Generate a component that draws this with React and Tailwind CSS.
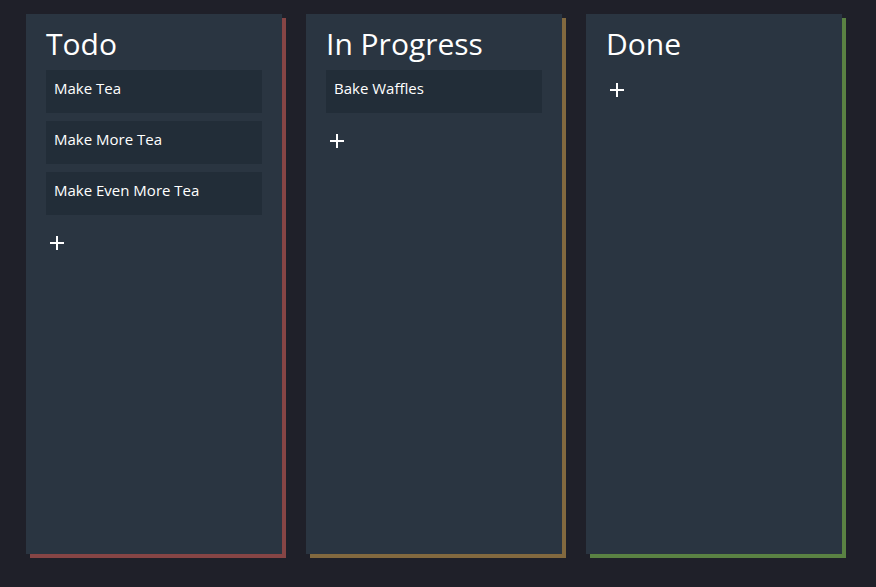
import React from 'react'

const columns = [
  { title: 'Todo', shadow: 'shadow-[4px_4px_0_#864545]', cards: ['Make Tea', 'Make More Tea', 'Make Even More Tea'] },
  { title: 'In Progress', shadow: 'shadow-[4px_4px_0_#82693f]', cards: ['Bake Waffles'] },
  { title: 'Done', shadow: 'shadow-[4px_4px_0_#5a8243]', cards: [] },
]

const Plus = () => (
  <svg width="16" height="16" viewBox="0 0 16 16" className="text-white">
    <path d="M8 1v14M1 8h14" stroke="currentColor" strokeWidth="2" />
  </svg>
)

const Column = ({ title, shadow, cards }) => (
  <div className={`w-[256px] h-[540px] bg-[#2a3541] px-5 pt-[4px] flex flex-col ${shadow}`}>
    <h2 className="text-[30px] leading-[52px] text-white">{title}</h2>
    <div className="flex flex-col gap-2">
      {cards.map((c) => (
        <div key={c} className="h-[43px] bg-[#222d38] px-2 pt-[5px] text-[15px] leading-[27px] text-white">
          {c}
        </div>
      ))}
      <button className="h-10 flex items-center pl-[3px] text-left">
        <Plus />
      </button>
    </div>
  </div>
)

export default function App() {
  return (
    <div className="min-h-screen bg-[#1f2029] pl-[26px] pt-[14px] flex gap-6" style={{ fontFamily: '"Open Sans", sans-serif' }}>
      {columns.map((col) => (
        <Column key={col.title} {...col} />
      ))}
    </div>
  )
}
